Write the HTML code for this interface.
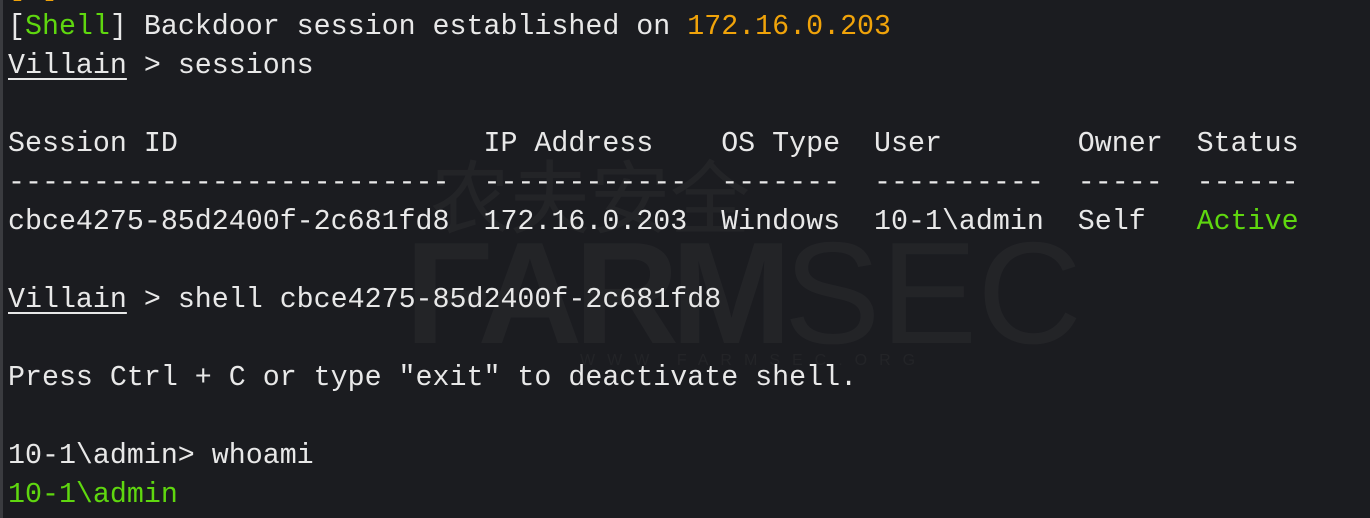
<!DOCTYPE html>
<html><head><meta charset="utf-8"><style>
html,body{margin:0;padding:0;}
body{width:1370px;height:518px;background:#1b1c20;overflow:hidden;position:relative;
font-family:"Liberation Mono","Noto Sans CJK SC",monospace;font-size:28.3px;color:#e8e8e8;}
.l{position:absolute;left:8px;white-space:pre;line-height:39px;height:39px;}
.g{color:#5fd70f}.o{color:#f0a30a}.u{text-decoration:underline;text-underline-offset:5px;text-decoration-thickness:2px}
.edge{position:absolute;left:0;top:0;width:3px;height:518px;background:#3a3b3f}
.wm{position:absolute;color:rgba(255,255,255,0.035);font-family:"Liberation Sans","Noto Sans CJK SC",sans-serif;white-space:nowrap}
</style></head><body>
<div class="edge"></div>
<div class="wm" style="left:430px;top:135px;font-size:80px;">农夫安全</div>
<div class="wm" style="left:405px;top:210px;font-size:145px;font-weight:bold;letter-spacing:-8px;">FARM<span style="font-weight:normal;letter-spacing:0px">SEC</span></div>
<div class="wm" style="left:580px;top:352px;font-size:16px;letter-spacing:12px;">WWW.FARMSEC.ORG</div>
<div class="l o" style="top:-31px">[+] Backdoor session      .</div>
<div class="l" style="top:8px">[<span class="g">Shell</span>] Backdoor session established on <span class="o">172.16.0.203</span></div>
<div class="l" style="top:47px"><span class="u">Villain</span> &gt; sessions</div>
<div class="l" style="top:125px">Session ID                  IP Address    OS Type  User        Owner  Status</div>
<div class="l" style="top:164px">--------------------------  ------------  -------  ----------  -----  ------</div>
<div class="l" style="top:203px">cbce4275-85d2400f-2c681fd8  172.16.0.203  Windows  10-1\admin  Self   <span class="g">Active</span></div>
<div class="l" style="top:281px"><span class="u">Villain</span> &gt; shell cbce4275-85d2400f-2c681fd8</div>
<div class="l" style="top:359px">Press Ctrl + C or type "exit" to deactivate shell.</div>
<div class="l" style="top:437px">10-1\admin&gt; whoami</div>
<div class="l g" style="top:476px">10-1\admin</div>
</body></html>
